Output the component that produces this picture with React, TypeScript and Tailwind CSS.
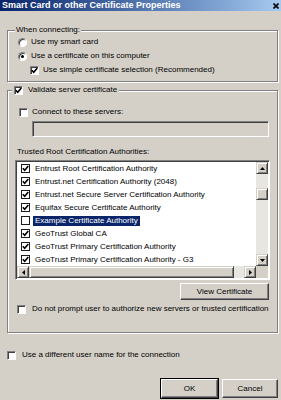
const raised =
  "bg-[#d4d0c8] border border-t-white border-l-white border-r-[#404040] border-b-[#404040] shadow-[inset_-1px_-1px_0_#808080]";
const sbButton =
  "bg-[#d4d0c8] border border-t-[#d4d0c8] border-l-[#d4d0c8] border-r-[#404040] border-b-[#404040] shadow-[inset_1px_1px_0_#fff,inset_-1px_-1px_0_#808080]";
const sunken =
  "border border-t-[#808080] border-l-[#808080] border-b-white border-r-white shadow-[inset_1px_1px_0_#404040]";
const etched =
  "border border-[#808080] shadow-[inset_1px_1px_0_#fff,1px_1px_0_#fff]";

const Check = () => (
  <svg width="7" height="7" viewBox="0 0 7 7">
    <path d="M0.8 3.2 L2.7 5.2 L6.3 1" stroke="black" strokeWidth="1.6" fill="none" />
  </svg>
);

const Box = ({ checked }: { checked?: boolean }) => (
  <span
    className={`w-[9px] h-[9px] shrink-0 bg-white flex items-center justify-center ${sunken}`}
  >
    {checked && <Check />}
  </span>
);

const FlatBox = ({ checked }: { checked?: boolean }) => (
  <span className="w-[9px] h-[9px] shrink-0 bg-white border border-[#1a1a1a] flex items-center justify-center">
    {checked && <Check />}
  </span>
);

const Radio = ({ on }: { on?: boolean }) => (
  <span className="w-[9px] h-[9px] shrink-0 rounded-full bg-white border border-t-[#808080] border-l-[#808080] border-b-white border-r-white shadow-[inset_1px_1px_0_#404040] flex items-center justify-center">
    {on && <span className="w-[3px] h-[3px] rounded-full bg-black" />}
  </span>
);

const Arrow = ({ dir }: { dir: "up" | "down" | "left" | "right" }) => {
  const pts = {
    up: "0,3 5,3 2.5,0",
    down: "0,0 5,0 2.5,3",
    left: "3,0 3,5 0,2.5",
    right: "0,0 0,5 3,2.5",
  }[dir];
  const vertical = dir === "up" || dir === "down";
  return (
    <svg width={vertical ? 5 : 3} height={vertical ? 3 : 5} viewBox={vertical ? "0 0 5 3" : "0 0 3 5"}>
      <polygon points={pts} fill="black" />
    </svg>
  );
};

const certs = [
  { name: "Entrust Root Certification Authority", checked: true },
  { name: "Entrust.net Certification Authority (2048)", checked: true },
  { name: "Entrust.net Secure Server Certification Authority", checked: true },
  { name: "Equifax Secure Certificate Authority", checked: true },
  { name: "Example Certificate Authority", checked: false, selected: true },
  { name: "GeoTrust Global CA", checked: true },
  { name: "GeoTrust Primary Certification Authority", checked: true },
  { name: "GeoTrust Primary Certification Authority - G3", checked: true },
];

export default function App() {
  return (
    <div className="w-[281px] h-[400px] overflow-hidden bg-[#d4d0c8] text-black text-[8px] leading-[10px] font-['Liberation_Sans',Arial,sans-serif]">
      {/* Title bar */}
      <div className="h-[11px] bg-linear-to-r from-[#0a246a] to-[#a6caf0] flex items-center justify-between pl-[2px] pr-[1px]">
        <span className="text-white font-bold text-[9px] leading-[11px] whitespace-nowrap">
          Smart Card or other Certificate Properties
        </span>
        <span className="w-[8px] h-[9px] flex items-center justify-center">
          <svg width="6" height="6" viewBox="0 0 6 6">
            <path d="M0.5 0.5 L5.5 5.5 M5.5 0.5 L0.5 5.5" stroke="black" strokeWidth="1.6" />
          </svg>
        </span>
      </div>

      {/* When connecting */}
      <fieldset className={`mt-[14px] ml-[7px] w-[271px] p-0 ${etched}`}>
        <legend className="ml-[7px] px-[1px] bg-[#d4d0c8]">When connecting:</legend>
        <div className="flex flex-col gap-[4px] pt-[2px] pb-[6px] pl-[10px]">
          <div className="flex items-center gap-[4px] h-[10px]">
            <Radio />
            <span>Use my smart card</span>
          </div>
          <div className="flex items-center gap-[4px] h-[10px]">
            <Radio on />
            <span>Use a certificate on this computer</span>
          </div>
          <div className="flex items-center gap-[4px] h-[10px] ml-[12px]">
            <Box checked />
            <span>Use simple certificate selection (Recommended)</span>
          </div>
        </div>
      </fieldset>

      {/* Validate server certificate */}
      <fieldset className={`mt-[3px] ml-[7px] w-[271px] p-0 ${etched}`}>
        <legend className="ml-[4px] px-[2px] bg-[#d4d0c8]">
          <span className="flex items-center gap-[5px] h-[10px]">
            <Box checked />
            <span>Validate server certificate</span>
          </span>
        </legend>
        <div className="flex flex-col pl-[7px] pb-[18px]">
          <div className="mt-[12px] ml-[4px] flex items-center gap-[4px] h-[10px]">
            <Box />
            <span>Connect to these servers:</span>
          </div>
          <div className={`mt-[4px] ml-[17px] w-[237px] h-[16px] bg-[#d4d0c8] ${sunken}`} />
          <div className="mt-[10px] ml-[2px] h-[10px]">Trusted Root Certification Authorities:</div>

          {/* Certificate list */}
          <div className={`mt-[3px] w-[255px] h-[120px] bg-white p-[1px] flex flex-col ${sunken}`}>
            <div className="flex h-[104px]">
              <div className="flex-1 flex flex-col overflow-hidden">
                {certs.map((c) => (
                  <div key={c.name} className="h-[13px] shrink-0 flex items-center gap-[3px] pl-[4px] whitespace-nowrap">
                    <FlatBox checked={c.checked} />
                    <span className={`px-[2px] h-[10px] ${c.selected ? "bg-[#0a246a] text-white" : ""}`}>
                      {c.name}
                    </span>
                  </div>
                ))}
              </div>
              <div className="w-[12px] flex flex-col bg-[#e8e6e1]">
                <div className={`h-[12px] flex items-center justify-center ${sbButton}`}>
                  <Arrow dir="up" />
                </div>
                <div className="flex-1">
                  <div className={`mt-[14px] h-[12px] ${sbButton}`} />
                </div>
                <div className={`h-[12px] flex items-center justify-center ${sbButton}`}>
                  <Arrow dir="down" />
                </div>
              </div>
            </div>
            <div className="flex h-[12px] bg-[#e8e6e1]">
              <div className={`w-[12px] flex items-center justify-center ${sbButton}`}>
                <Arrow dir="left" />
              </div>
              <div className={`w-[205px] ${sbButton}`} />
              <div className="flex-1" />
              <div className={`w-[12px] flex items-center justify-center ${sbButton}`}>
                <Arrow dir="right" />
              </div>
              <div className="w-[12px] bg-[#d4d0c8]" />
            </div>
          </div>

          <div className="mt-[3px] w-[254px] flex justify-end">
            <button className={`w-[89px] h-[17px] flex items-center justify-center ${raised}`}>
              View Certificate
            </button>
          </div>
          <div className="mt-[4px] ml-[2px] flex items-center gap-[6px] h-[10px] whitespace-nowrap">
            <Box />
            <span>Do not prompt user to authorize new servers or trusted certification</span>
          </div>
        </div>
      </fieldset>

      <div className="mt-[17px] ml-[7px] flex items-center gap-[6px] h-[10px]">
        <Box />
        <span>Use a different user name for the connection</span>
      </div>

      <div className="mt-[19px] flex justify-end gap-[4px] pr-[3px]">
        <button className={`w-[57px] h-[19px] flex items-center justify-center outline outline-black ${raised}`}>
          OK
        </button>
        <button className={`w-[56px] h-[19px] flex items-center justify-center ${raised}`}>
          Cancel
        </button>
      </div>
    </div>
  );
}
